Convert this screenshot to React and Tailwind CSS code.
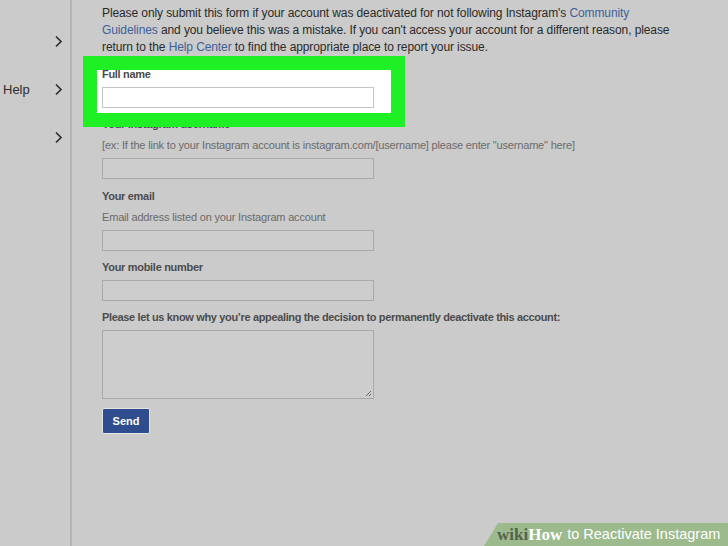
import React from "react";

const Chevron = () => (
  <svg width="9" height="13" viewBox="0 0 9 13" fill="none">
    <path d="M2 1.5 L7 6.5 L2 11.5" stroke="#2b2b2b" strokeWidth="1.6" />
  </svg>
);

const Field = ({ label, hint, white, className = "" }) => (
  <div className={className}>
    {label && (
      <div className="text-[11px] font-bold text-[#4b4b4b] leading-[14px] tracking-[-0.3px]">{label}</div>
    )}
    {hint && (
      <div className="mt-[7px] text-[11px] text-[#6a6a6a] leading-[14px] tracking-[-0.18px]">{hint}</div>
    )}
    <div
      className={`mt-[6px] w-[272px] h-[21px] border ${
        white ? "bg-white border-[#c4c4c4]" : "bg-[#cdcdcd] border-[#a9a9a9]"
      }`}
    />
  </div>
);

const App = () => {
  return (
    <div
      className="relative w-[728px] h-[546px] overflow-hidden bg-[#cbcbcb] flex"
      style={{ fontFamily: "'Liberation Sans', Arial, sans-serif" }}
    >
      {/* left nav */}
      <div className="w-[72px] shrink-0 border-r-2 border-[#b4b4b4] relative">
        <div className="absolute left-[54px] top-[35px]">
          <Chevron />
        </div>
        <div className="absolute left-[3px] top-[80px] text-[13px] text-[#2e2e2e]">Help</div>
        <div className="absolute left-[54px] top-[83px]">
          <Chevron />
        </div>
        <div className="absolute left-[54px] top-[131px]">
          <Chevron />
        </div>
      </div>

      {/* form */}
      <div className="pl-[30px] pt-[5px]">
        <p className="text-[12px] leading-[17px] text-[#2a2a2a] whitespace-nowrap tracking-[-0.1px]">
          Please only submit this form if your account was deactivated for not following Instagram's{" "}
          <span className="text-[#3f5f9a]">Community</span>
          <br />
          <span className="text-[#3f5f9a]">Guidelines</span> and you believe this was a mistake. If you can't access
          your account for a different reason, please
          <br />
          return to the <span className="text-[#3f5f9a]">Help Center</span> to find the appropriate place to report
          your issue.
        </p>

        <div className="relative mt-[11px]">
          <div className="absolute z-10 left-[-19px] top-[-11px] w-[322px] h-[71px] border-[14px] border-[#1fef25] bg-white" />
          <div className="relative z-20">
            <Field label="Full name" white />
          </div>
        </div>

        <Field
          className="mt-[9px]"
          label="Your Instagram username"
          hint={'[ex: If the link to your Instagram account is instagram.com/[username] please enter "username" here]'}
        />
        <Field className="mt-[10px]" label="Your email" hint="Email address listed on your Instagram account" />
        <Field className="mt-[9px]" label="Your mobile number" />

        <div className="mt-[9px] text-[11px] font-bold text-[#4b4b4b] leading-[14px] tracking-[-0.35px]">
          Please let us know why you’re appealing the decision to permanently deactivate this account:
        </div>
        <div className="relative mt-[6px] w-[272px] h-[69px] border border-[#a9a9a9] bg-[#cdcdcd]">
          <svg className="absolute right-[1px] bottom-[1px]" width="7" height="7" viewBox="0 0 7 7">
            <path d="M6 1 L1 6 M6 4 L4 6" stroke="#6a6a6a" strokeWidth="1" />
          </svg>
        </div>
        <button className="block mt-[9px] w-[48px] h-[26px] bg-[#2f4d8e] border border-[#e4e4e4] rounded-[2px] text-white text-[11px] font-bold">
          Send
        </button>
      </div>

      {/* wikihow banner */}
      <div className="absolute right-0 bottom-0 w-[244px] h-[23px] bg-[#9cba8c] [clip-path:polygon(14px_0,100%_0,100%_100%,0_100%)] flex items-center pl-[13px]">
        <span
          className="text-[17px] font-bold text-[#55624f] leading-none"
          style={{ fontFamily: "'Liberation Serif', serif" }}
        >
          wiki
        </span>
        <span
          className="text-[17px] font-bold text-white leading-none"
          style={{ fontFamily: "'Liberation Serif', serif" }}
        >
          How
        </span>
        <span className="ml-[5px] text-[14.5px] text-white leading-none">to Reactivate Instagram</span>
      </div>
    </div>
  );
};

export default App;
